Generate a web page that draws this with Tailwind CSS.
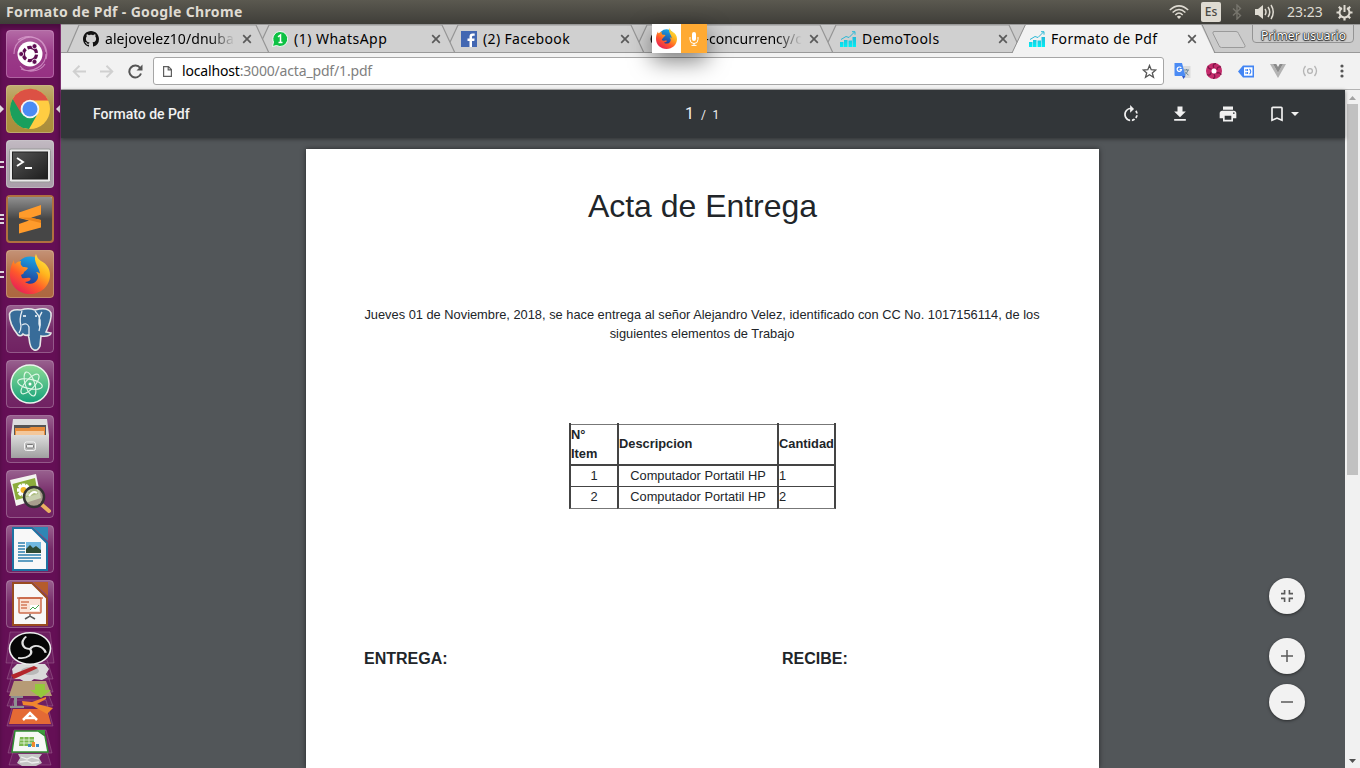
<!DOCTYPE html>
<html lang="es">
<head>
<meta charset="utf-8">
<title>Formato de Pdf</title>
<script src="https://cdn.jsdelivr.net/npm/@tailwindcss/browser@4"></script>
</head>
<body class="w-[1360px] h-[768px] overflow-hidden flex flex-col font-['Noto_Sans',sans-serif] text-[14px] bg-[#525659]">

<!-- shared symbols -->
<svg class="absolute w-0 h-0">
  <defs>
    <linearGradient id="ffo" x1="0.9" y1="0" x2="0.2" y2="1"><stop offset="0" stop-color="#fff04a"/><stop offset=".35" stop-color="#ffb51e"/><stop offset=".65" stop-color="#ff5a2a"/><stop offset="1" stop-color="#e5195c"/></linearGradient>
    <linearGradient id="ffb" x1="0.6" y1="0" x2="0.3" y2="1"><stop offset="0" stop-color="#1aa6e6"/><stop offset="1" stop-color="#24308e"/></linearGradient>
    <linearGradient id="bars" x1="0" y1="0" x2="0" y2="1"><stop offset="0" stop-color="#25b7d8"/><stop offset="1" stop-color="#00f0f5"/></linearGradient>
  </defs>
  <symbol id="firefox" viewBox="0 0 40 40">
    <circle cx="20" cy="17" r="14.500" fill="url(#ffb)"/>
    <path d="M26 0c1 3 2 5 5 7 6 3 9 8 9 14 0 11-9 19-20 19S0 32 0 21C0 15 1 11 4 6c0 2 0 3 1 4 2-2 4-3 6-3-1 3 0 4 2 6 2 0 4 0 5 1-1 2-3 3-4 4 0 2-2 2-3 3l1 3c3 1 5-1 8 0 2 1-1 4-5 4 4 3 10 2 12-2 2-3 1-6-1-8 2 0 4 1 4 2 0-6-8-13-4-20z" fill="url(#ffo)"/>
  </symbol>
  <symbol id="chart" viewBox="0 0 16 16">
    <path d="M0 11h3.500v5H0zM4 9h3.500v7H4zM8.500 9.500H12V16H8.500zM12.500 6H16v10h-3.500z" fill="url(#bars)"/>
    <path d="M1 8.500 6 5.500 9 6.500 14.500 1M12 .7h3v3" fill="none" stroke="#29b8d6" stroke-width="1"/>
  </symbol>
  <symbol id="close" viewBox="0 0 10 10"><path d="M1.200 1.200l7.600 7.600M8.800 1.200l-7.600 7.600" stroke="#5a5a5a" stroke-width="1.700" fill="none"/></symbol>
</svg>

<!-- system panel -->
<header class="h-6 shrink-0 flex items-center justify-between pl-1.5 pr-[7px] bg-linear-to-b from-[#5b5950] to-[#3f3e39] text-[#dfdbd2]">
  <span class="font-bold tracking-[0.345px] leading-6">Formato de Pdf - Google Chrome</span>
  <div class="flex items-center h-6">
    <svg class="w-5 h-4 mr-3" viewBox="0 0 20 16" fill="none" stroke="#dfdbd2" stroke-width="1.500"><path d="M.8 6Q10-2.300 19.200 6M3.600 8.500q6.400-6 12.800 0M6.300 11q3.700-3.800 7.400 0"/><path d="M7.800 12.700 10 15l2.200-2.300q-2.200-2-4.400 0z" fill="#dfdbd2" stroke="none"/></svg>
    <span class="w-5 h-5 rounded-xs bg-[#dfdbd2] text-[#4a4842] text-[12px] font-medium leading-5 text-center mr-[10px]">Es</span>
    <svg class="w-3 h-4 mr-[11px]" viewBox="0 0 12 16" fill="none" stroke="#77756d" stroke-width="1.400"><path d="M2 4.500l7.500 7L6 15V1l3.500 3.500L2 11.500"/></svg>
    <svg class="w-[21px] h-4 mr-3" viewBox="0 0 21 16"><path d="M1 5h3l5-4v14l-5-4H1z" fill="#dfdbd2"/><path d="M11 5q2 3 0 6M14 3q3.500 5 0 10M17 1q4.500 7 0 14" fill="none" stroke="#dfdbd2" stroke-width="1.500"/></svg>
    <span class="w-9 mr-[13px] leading-6 whitespace-nowrap">23:23</span>
    <svg class="w-[17px] h-[17px]" viewBox="0 0 17 17" fill="none" stroke="#dfdbd2"><path d="M6 4.200a5 5 0 1 0 5 0" stroke-width="2"/><path d="M8.500 1v7" stroke-width="2"/><path d="M8.500 13.500v3M.5 8.500h3M13.500 8.500h3M2.800 14.200l2.200-2.200M14.200 14.200 12 12M2.800 2.800 5 5M14.200 2.800 12 5" stroke-width="2.200"/></svg>
  </div>
</header>

<div class="flex flex-1 min-h-0">

<!-- launcher -->
<nav class="w-[61px] shrink-0 bg-[#640f55] border-r border-[#7b2f6e] shadow-[inset_0_4px_4px_rgba(0,0,0,0.25)]">
<svg class="w-[60px] h-[744px] block" viewBox="0 24 60 744">
  <defs>
    <linearGradient id="gl" x1="0" y1="0" x2="0" y2="1"><stop offset="0" stop-color="#fff" stop-opacity=".34"/><stop offset=".5" stop-color="#fff" stop-opacity=".12"/><stop offset="1" stop-color="#fff" stop-opacity=".08"/></linearGradient>
    <linearGradient id="glfade" x1="0" y1="0" x2="0" y2="1"><stop offset="0" stop-color="#fff" stop-opacity=".4"/><stop offset="1" stop-color="#fff" stop-opacity="0"/></linearGradient>
    <linearGradient id="silver" x1="0" y1="0" x2="0" y2="1"><stop offset="0" stop-color="#dcdcdc"/><stop offset="1" stop-color="#a0a0a0"/></linearGradient>
    <linearGradient id="term" x1="0" y1="0" x2="1" y2="1"><stop offset="0" stop-color="#555"/><stop offset="1" stop-color="#1d1d1d"/></linearGradient>
    <linearGradient id="atom" x1="0" y1="0" x2="0" y2="1"><stop offset="0" stop-color="#8fdc97"/><stop offset="1" stop-color="#15a07a"/></linearGradient>
    <g id="tile"><rect x=".5" y=".5" width="47" height="47" rx="3.500" fill="url(#gl)" stroke="#fff" stroke-opacity=".28"/></g>
  </defs>
  <!-- dash -->
  <g transform="translate(6 30)">
    <rect width="48" height="48" rx="4" fill="#8d1f78"/><use href="#tile"/>
    <path d="M8 24C8 10 22 4 32 9c8 4 10 14 8 20M40 24c0 12-14 20-25 15M12 10c10-7 26-3 28 12M14 36c6 8 20 6 25-2" fill="none" stroke="#e9b8df" stroke-opacity=".6" stroke-width="1.200"/>
    <circle cx="24" cy="24" r="12.500" fill="#fff"/>
    <circle cx="24" cy="24" r="6.600" fill="none" stroke="#5f0d52" stroke-width="3.200" stroke-dasharray="11.800 2" transform="rotate(6 24 24)"/>
    <g fill="#5f0d52" stroke="#fff" stroke-width=".8"><circle cx="15.200" cy="24" r="2.500"/><circle cx="28.500" cy="16.200" r="2.500"/><circle cx="28.500" cy="31.800" r="2.500"/></g>
  </g>
  <!-- chrome -->
  <g transform="translate(6 85)">
    <rect width="48" height="48" rx="4" fill="#a38329"/><use href="#tile"/>
    <circle cx="24" cy="24" r="20" fill="#ffcd42"/>
    <path d="M24 24 6.700 14A20 20 0 0 0 23 44l8-14z" fill="#1a9f5d"/>
    <path d="M6.700 14A20 20 0 0 1 42.300 15.500H24L15 28z" fill="#dc5144"/>
    <circle cx="24" cy="24" r="9.300" fill="#f4f4f4"/><circle cx="24" cy="24" r="7.500" fill="#4b8bf4"/>
  </g>
  <path d="M0 105l4 4-4 4zM60 105l-4 4 4 4z" fill="#e2dce0"/>
  <!-- terminal -->
  <g transform="translate(6 140)">
    <rect width="48" height="48" rx="4" fill="#a397a3"/><use href="#tile"/>
    <rect x="3.500" y="9" width="41" height="33" rx="1.500" fill="#e9e9e9" stroke="#999"/><rect x="6.500" y="12" width="35" height="27" fill="url(#term)" stroke="#222"/>
    <path d="M11 18l6 4-6 4M19 28h7" fill="none" stroke="#fff" stroke-width="1.900"/>
  </g>
  <path d="M0 162h4M0 167h4M0 215h4M0 219h4M0 223h4M0 272h4M0 277h4" stroke="#ddd6dc" stroke-width="2"/>
  <!-- sublime -->
  <g transform="translate(6 195)">
    <rect width="48" height="48" rx="4" fill="#b0703f"/><rect x="2" y="2" width="44" height="44" rx="2" fill="#464646"/><rect x="2" y="2" width="44" height="22" fill="url(#glfade)"/>
    <path d="M13 17.500 35 10v9.500l-10 3.200 10 2.300v7.500L13 38.500V29l10-3.500-10-2.500z" fill="#ff9b2b"/><path d="M13 22.500 35 28v-3l-10-2.300z" fill="#e8831a"/>
  </g>
  <!-- firefox -->
  <g transform="translate(6 250)"><rect width="48" height="48" rx="4" fill="#a65a2f"/><use href="#tile"/><use href="#firefox" x="4" y="4" width="40" height="40"/></g>
  <!-- postgres -->
  <g transform="translate(6 305)"><use href="#tile"/>
    <path d="M3.500 9Q5 3.500 15 5q7-2.500 14 0 13-3.500 16 3 1 6-5 19l5 1q-1 4-10 3l-1 10q-2 5-6 4-4-1-5-12l-1-3q-3 1-5-1-2 3-5 1Q3 19 3.500 9z" fill="#386c99" stroke="#e6e6e6" stroke-width="1.600"/>
    <path d="M16 6q-3 8-1 15 0 4-2 7M16 20q5-3 7 2v9M29 6q8 8 4 20M36 7q-5 7-2 16" fill="none" stroke="#e6edf3" stroke-width="1.300"/><path d="M17 11h3M29 11h2" stroke="#fff" stroke-width="1.500"/>
  </g>
  <!-- atom -->
  <g transform="translate(6 360)"><use href="#tile"/><circle cx="24" cy="24" r="19" fill="url(#atom)" stroke="#ebf5ee" stroke-width="1.500"/>
    <g fill="none" stroke="#dff7e6" stroke-width="1.100"><ellipse cx="24" cy="24" rx="12.500" ry="4.700" transform="rotate(12 24 24)"/><ellipse cx="24" cy="24" rx="12.500" ry="4.700" transform="rotate(72 24 24)"/><ellipse cx="24" cy="24" rx="12.500" ry="4.700" transform="rotate(132 24 24)"/></g><circle cx="24" cy="24" r="1.500" fill="#fff"/>
  </g>
  <!-- files -->
  <g transform="translate(6 415)"><use href="#tile"/><path d="M7 4h34l2 16H5z" fill="#dedede"/><rect x="8" y="10" width="32" height="11" fill="#565656"/><path d="M9 13h14l2-1h14v9H9z" fill="#e88e3c"/><path d="M10 16h28v5H10z" fill="#f3c79b"/><path d="M5 20h38v23H5z" fill="url(#silver)"/><rect x="18.500" y="27" width="11" height="8.500" rx="2" fill="#bbb" stroke="#f5f5f5"/><rect x="20.500" y="29.500" width="7" height="3.500" rx="1" fill="#eee" stroke="#777"/></g>
  <!-- image viewer -->
  <g transform="translate(6 470)"><use href="#tile"/><path d="M4 10 30 4l5 24-25 8z" fill="#f4f4f0"/><path d="M6.500 14 29 8l3 16-22 6z" fill="#8cad3c"/>
    <g stroke="#fff" stroke-width="3.500"><path d="M11 20h13M17.500 13.500v13M13 15l9 10M22 15l-9 10"/></g><circle cx="17.500" cy="20" r="3" fill="#f2b62a"/>
    <path d="M35 34l8 7" stroke="#eab162" stroke-width="4" stroke-linecap="round"/><circle cx="28" cy="27" r="10" fill="#b9c49a" fill-opacity=".75" stroke="#333" stroke-width="2.500"/><path d="M23 26q4-6 8-3" stroke="#fff" stroke-width="2" fill="none"/></g>
  <!-- writer -->
  <g transform="translate(6 525)"><use href="#tile"/><path d="M7 3h19l15 15v27H7z" fill="#f8f8f8" stroke="#1d73a3" stroke-width="2"/><path d="M27 2h15v14z" fill="#2f86b5"/><path d="M12 18h7M12 21h7M12 24h7M12 27h7M12 30h23M12 33h23M12 36h15" stroke="#2b7fae" stroke-width="1.500"/><rect x="20" y="17" width="15" height="11" fill="#71b8e0"/><path d="M20 28v-4l4-4 3 3 3-2 5 4v3z" fill="#2e4b35"/></g>
  <!-- impress -->
  <g transform="translate(6 580)"><use href="#tile"/><path d="M7 3h19l15 15v27H7z" fill="#f8f8f8" stroke="#9a4c20" stroke-width="2"/><path d="M27 2h15v14z" fill="#b55c2c"/><rect x="13" y="18" width="22" height="15" rx="1" fill="#fae3d7" stroke="#cc6b4b" stroke-width="1.500"/><path d="M15 22h8M15 25h6M15 28h6" stroke="#d37959" stroke-width="1.300"/><path d="M24 31v-6h9v6z" fill="#fff"/><path d="M24 30l3-3 2 2 4-4" stroke="#4ba54c" fill="none"/><path d="M11 18h26" stroke="#c45d3d" stroke-width="1.300"/><path d="M24 34v3M19 39l5-3 5 3" stroke="#555" stroke-width="1.500" fill="none"/></g>
  <!-- folded stack -->
  <g stroke="#b68dac" stroke-opacity=".35" fill="#fff" fill-opacity=".07"><path d="M10 632h40l4 31H6zM13 660h34l6 19H7zM13 672h34l6 20H7zM14 688h32l7 18H7zM14 700h32l7 26H7zM14 730h32l6 23H8zM15 745h30l6 20H9z"/></g>
  <!-- settings gear -->
  <path d="M12 669l5-5h7l4-3h6l4 3h7l4 5-3 5 2 3-6 3-8-1-4 3h-5l-5-3h-6z" fill="#dadada"/><ellipse cx="30" cy="671" rx="9" ry="4" fill="#b9b9b9"/><path d="M11 675 34 666l4 2-24 11z" fill="#b3262b"/>
  <!-- archive -->
  <path d="M14 681h32l6 15H9z" fill="#b69b76"/>
  <path d="M11 696h12v2H11zM14 698h3v8h-3zM10 706h14v2H10z" fill="#8d9090"/>
  <path d="M9 724l4-15h34l4 15z" fill="#e46a35"/><path d="M22 701l10 1 14-5v2l-9 5 16 4-6 6-14-8-10-1z" fill="#f0862e"/>
  <path d="M35 684h10v6h6l-10 8-11-8h5z" fill="#95c93c"/>
  <path d="M23 720l7-7 7 7M26 718h8" stroke="#fff" stroke-width="2.500" fill="none"/>
  <!-- calc -->
  <path d="M15 731h23l7 5 3 16H12z" fill="#f6f8f5" stroke="#2f8d32" stroke-width="1.500"/><path d="M36 730h9v5z" fill="#3d9c3d"/><path d="M20 737h14v9H19z" fill="#79b84d"/><path d="M20 740h14M20 743h14M24 737v9M29 737v9" stroke="#fff" stroke-width=".7"/><path d="M28 747v-3h3v3z" fill="#3c8cc7"/><path d="M32 747v-5h3v5z" fill="#ef8a2f"/><path d="M36 747v-3h3v3z" fill="#3c8cc7"/>
  <path d="M18 754h24l-3 4 3 5-6 3H22l-5-3 3-5z" fill="#c5c5c5"/><path d="M21 757l6 2 5-2 7 2M20 762l7-1 5 2 7-1" stroke="#efefef" fill="none" stroke-width="1.300"/>
  <!-- obs -->
  <ellipse cx="30" cy="648.500" rx="20.500" ry="15.800" fill="#060606" stroke="#eee" stroke-width="1.600"/>
  <g transform="translate(30 649) scale(1.28 1)" fill="none" stroke="#e2e2e2" stroke-width="1.800">
    <path id="arm" d="M0 0C-6 0-8-7-3-12.500"/><use href="#arm" transform="rotate(120)"/><use href="#arm" transform="rotate(240)"/>
  </g>
</svg>
</nav>

<!-- browser window -->
<main class="flex-1 min-w-0 flex flex-col">

  <!-- tab strip -->
  <div class="h-[29px] shrink-0 relative bg-[#cbcbcb]">
    <svg class="absolute inset-0 w-[1299px] h-[29px]" viewBox="61 24 1299 29">
      <g fill="#d0d0d0" stroke="#959595" stroke-width="1.200">
        <path d="M823 53l13-28h173l13 28z"/><path d="M634 53l13-28h173l13 28z"/><path d="M445 53l13-28h173l13 28z"/><path d="M256 53l13-28h173l13 28z"/><path d="M67 53l12-28h177l13 28z"/>
      </g>
      <path d="M61 52.500h1299M61 24.500h1299" stroke="#999"/>
      <path d="M1012 53.500l13.500-28.500h175.500l13.500 28.500z" fill="#f2f2f2"/><path d="M1012 53l13.500-28.500H1202L1215 53" fill="none" stroke="#8f8f8f"/>
      <path d="M1214 31.500h22q2 0 2.500 2l6.500 12q.5 2-1.500 2h-22q-2 0-2.500-2l-6-12q-.5-2 1-2z" fill="#d0d0d0" stroke="#9a9a9a"/>
      <path d="M1252.500 25v14q0 3.500 3.500 3.500h94q3.500 0 3.500-3.500V25" fill="#cecece" stroke="#949494"/>
    </svg>
    <div class="relative flex h-[29px] pl-[22px] text-black leading-[29px] whitespace-nowrap">
      <div class="flex items-center w-[189px]">
        <svg class="w-4 h-4 mr-1.5" viewBox="0 0 16 16"><path fill="#111" d="M8 0C3.580 0 0 3.580 0 8c0 3.540 2.290 6.530 5.470 7.590.4.070.55-.17.55-.38 0-.19-.01-.82-.01-1.490-2.010.37-2.530-.49-2.690-.94-.09-.23-.48-.94-.82-1.130-.28-.15-.68-.52-.01-.53.63-.01 1.080.58 1.230.82.72 1.210 1.870.87 2.330.66.070-.52.28-.87.51-1.070-1.780-.2-3.640-.89-3.640-3.950 0-.87.31-1.590.82-2.150-.08-.2-.36-1.020.08-2.120 0 0 .67-.21 2.200.82.64-.18 1.320-.27 2-.27s1.360.09 2 .27c1.530-1.040 2.200-.82 2.200-.82.44 1.100.16 1.920.08 2.120.51.56.82 1.270.82 2.150 0 3.070-1.870 3.750-3.650 3.950.29.25.54.73.54 1.480 0 1.070-.01 1.930-.01 2.200 0 .21.15.46.55.38A8.010 8.010 0 0 0 16 8c0-4.420-3.580-8-8-8z"/></svg>
        <span class="w-[130px] overflow-hidden tracking-[0.067px] mask-r-from-80% mask-r-to-100%">alejovelez10/dnuba</span>
        <svg class="w-2.5 h-2.5 ml-[7px]"><use href="#close"/></svg>
      </div>
      <div class="flex items-center w-[189px]">
        <svg class="w-4 h-4 mr-1.5" viewBox="0 0 16 16"><path d="M8 .5a7.500 7.500 0 1 1-3.500 14L.5 15.500 1.500 11A7.500 7.500 0 0 1 8 .5z" fill="#0dc143" stroke="#fff" stroke-width=".9"/><path d="M6 5.800 8.500 4v8M6.500 11.500h4" stroke="#fff" stroke-width="1.500" fill="none"/></svg>
        <span class="w-[130px] tracking-[0.48px]">(1) WhatsApp</span>
        <svg class="w-2.5 h-2.5 ml-[7px]"><use href="#close"/></svg>
      </div>
      <div class="flex items-center w-[189px]">
        <svg class="w-4 h-4 mr-1.5" viewBox="0 0 16 16"><rect width="16" height="16" fill="#4267b2"/><path d="M11 16V10h2.300l.3-2.500H11V6q0-1.200 1.200-1.200h1.500V2.500h-2.200Q8.500 2.500 8.500 5.500v2h-2V10h2v6z" fill="#fff"/></svg>
        <span class="w-[130px] tracking-[0.35px]">(2) Facebook</span>
        <svg class="w-2.5 h-2.5 ml-[7px]"><use href="#close"/></svg>
      </div>
      <div class="flex items-center w-[189px]">
        <svg class="w-4 h-4 mr-1.5" viewBox="0 0 16 16"><circle cx="8" cy="8" r="7.500" fill="#111"/></svg>
        <span class="w-[130px] overflow-hidden flex justify-end tracking-[0.02px] mask-r-from-80% mask-r-to-100%">go-concurrency/c</span>
        <svg class="w-2.5 h-2.5 ml-[7px]"><use href="#close"/></svg>
      </div>
      <div class="flex items-center w-[189px]">
        <svg class="w-4 h-4 ml-px mr-1.5"><use href="#chart"/></svg>
        <span class="w-[129px] tracking-[0.42px]">DemoTools</span>
        <svg class="w-2.5 h-2.5 ml-[7px]"><use href="#close"/></svg>
      </div>
      <div class="flex items-center w-[189px]">
        <svg class="w-4 h-4 ml-px mr-1.5"><use href="#chart"/></svg>
        <span class="w-[129px] tracking-[0.34px]">Formato de Pdf</span>
        <svg class="w-2.5 h-2.5 ml-[7px]"><use href="#close"/></svg>
      </div>
      <span class="ml-[44px] mt-[4px] h-4 leading-4 text-[12px] text-white tracking-[0.07px] [text-shadow:0_0_1px_#222,0_0_1px_#222,0_0_1px_#222,0_0_2px_#333,0_1px_1px_#333]">Primer usuario</span>
    </div>
    <!-- recording indicator -->
    <div class="absolute left-[591px] top-0 z-10 flex h-[29px] shadow-[0_8px_22px_rgba(0,0,0,0.5)]">
      <div class="w-[29px] bg-white flex items-center justify-center"><svg class="w-[21px] h-[21px]"><use href="#firefox"/></svg></div>
      <div class="w-[26px] bg-[#ffaa33] flex items-center justify-center"><svg class="w-2.5 h-3.5" viewBox="0 0 10 14"><rect x="3" y="0" width="4" height="9" rx="2" fill="#fff"/><path d="M1 5v2.500a4 4 0 0 0 8 0V5M5 11v2.500M2.500 13.400h5" fill="none" stroke="#fff"/></svg></div>
    </div>
  </div>

  <!-- address bar -->
  <div class="h-[37px] shrink-0 flex items-center bg-[#f2f2f2] border-b border-[#b3b3b3] pl-[11px] pr-3">
    <svg class="w-[14px] h-[13px] mr-[14px]" viewBox="0 0 14 13" fill="none" stroke="#d0d0d0" stroke-width="1.900"><path d="M7.500.8 1.700 6.500l5.800 5.700M2 6.500h12"/></svg>
    <svg class="w-[14px] h-[13px] mr-[14px]" viewBox="0 0 14 13" fill="none" stroke="#d0d0d0" stroke-width="1.900"><path d="M6.500.8l5.800 5.700-5.800 5.700M12 6.500H0"/></svg>
    <svg class="w-[15px] h-[15px] mr-[10px]" viewBox="0 0 15 15"><path d="M12.200 4A6 6 0 1 0 13 9.500" fill="none" stroke="#555" stroke-width="2"/><path d="M14.500.5v6h-6z" fill="#555"/></svg>
    <div class="w-[1011px] h-7 flex items-center bg-white border border-[#a6a6a6] rounded-[3px] pl-[9px] pr-[6px]">
      <svg class="w-[9px] h-[11px] mr-[10px]" viewBox="0 0 9 11" fill="none" stroke="#5f5f5f" stroke-width="1.200"><path d="M.6.600h4.900l2.900 3v6.800H.6zM5.200.6v3.200h3.200"/></svg>
      <span class="flex-1 tracking-[-0.168px] leading-7 text-[#808080]"><span class="text-black">localhost</span>:3000/acta_pdf/1.pdf</span>
      <svg class="w-[15px] h-[15px]" viewBox="0 0 15 15" fill="none" stroke="#555" stroke-width="1.300"><path d="M7.500 1.500l1.700 4.200 4.600.3-3.500 2.900 1.200 4.400-4-2.500-4 2.500 1.200-4.400L1.200 6l4.600-.3z"/></svg>
    </div>
    <div class="flex items-center ml-[10px]">
      <svg class="w-[17px] h-4 mr-[15px]" viewBox="0 0 17 16"><path d="M7 3h9.500v12H10z" fill="#dcdcdc"/><path d="M10 7h5M12.500 6v1M14 7q-1 4-4 5M11 8.500q1.500 2.500 3.500 3.500" stroke="#6d8796" fill="none"/><path d="M1 0h7l3.500 13H1.200Q.5 13 .5 12V.6z" fill="#4b8bf4"/><path d="M8 13h3.500l-2 3z" fill="#3059c9"/><path d="M7.200 5A2.200 2.200 0 1 0 7.500 6.700H5.600" stroke="#fff" stroke-width="1.200" fill="none"/></svg>
      <svg class="w-4 h-4 mr-4" viewBox="0 0 16 16"><circle cx="8" cy="8" r="8" fill="#c52a6b"/><g stroke="#7d1748" stroke-width="1.300" fill="none"><path d="M8 5Q6 1 10 .5M11 7q0-4 4-3M10.500 10q4-1 4.500 2M8 11q2 4-1 4.500M5 9.500q-1 4-4 2M5.500 6Q2 6 2 3"/></g><circle cx="8" cy="8" r="2.500" fill="#fff"/></svg>
      <svg class="w-[17px] h-[13px] mr-[15px]" viewBox="0 0 17 13"><path d="M0 6.500 5 .5h11v12H5z" fill="#4285f4"/><rect x="6" y="2.300" width="8.500" height="8.400" fill="#fff"/><path d="M8 4v2M8 7v2M9.500 4v2M9.500 7v2M11.500 3.800q2.500 2.700 0 5.400" stroke="#4285f4" stroke-width="1.100" fill="none"/></svg>
      <svg class="w-4 h-[14px] mr-4" viewBox="0 0 16 14"><path d="M0 0h3l5 8.700L13 0h3L8 14z" fill="#b3b3b3"/><path d="M3 0h3.300L8 3l1.700-3H13L8 8.700z" fill="#8b8b8b"/></svg>
      <svg class="w-4 h-4 mr-[22px]" viewBox="0 0 16 16" fill="none" stroke="#b5b5b5" stroke-width="1.300"><circle cx="8" cy="8" r="2.400"/><path d="M3.500 3q-4 5 0 10M12.500 3q4 5 0 10"/></svg>
      <svg class="w-1 h-[14px]" viewBox="0 0 4 14" fill="#555"><circle cx="2" cy="2" r="1.600"/><circle cx="2" cy="7" r="1.600"/><circle cx="2" cy="12" r="1.600"/></svg>
    </div>
  </div>

  <!-- pdf viewer -->
  <div class="flex flex-1 min-h-0">
    <div class="relative w-[1284px] flex flex-col items-center bg-[#525659]">
      <div class="relative z-10 w-full h-12 shrink-0 bg-[#323639] shadow-[0_1px_4px_rgba(0,0,0,0.45)] grid grid-cols-[1fr_auto_1fr] items-center text-[#f1f1f1] font-['Roboto',sans-serif]">
        <span class="pl-8 font-medium">Formato de Pdf</span>
        <div class="flex items-baseline w-[36px] gap-[7px] whitespace-nowrap"><span class="text-[16px]">1</span><span class="text-[12px] tracking-[0.2px]">/&nbsp; 1</span></div>
        <div class="flex items-center justify-end pr-[44px]">
          <svg class="w-[18px] h-[18px] mr-[30px]" viewBox="2 1 20 21" fill="#f1f1f1"><path d="M15.550 5.550L11 1v3.070C7.060 4.560 4 7.920 4 12s3.050 7.440 7 7.930v-2.020c-2.840-.48-5-2.940-5-5.910s2.160-5.430 5-5.910V10l4.550-4.450zM19.930 11c-.17-1.390-.72-2.730-1.620-3.890l-1.420 1.420c.54.75.88 1.600 1.020 2.470h2.020zM13 17.900v2.020c1.390-.17 2.740-.71 3.900-1.610l-1.440-1.440c-.75.54-1.590.89-2.460 1.030zm3.890-2.420l1.420 1.410c.9-1.160 1.450-2.500 1.620-3.890h-2.020c-.14.87-.48 1.720-1.020 2.480z"/></svg>
          <svg class="w-5 h-5 mr-7" viewBox="0 0 24 24" fill="#f1f1f1"><path d="M19 9h-4V3H9v6H5l7 7 7-7zM5 18v2h14v-2H5z"/></svg>
          <svg class="w-5 h-5 mr-[29px]" viewBox="0 0 24 24" fill="#f1f1f1"><path d="M19 8H5c-1.660 0-3 1.340-3 3v6h4v4h12v-4h4v-6c0-1.660-1.340-3-3-3zm-3 11H8v-5h8v5zm3-7c-.55 0-1-.45-1-1s.45-1 1-1 1 .45 1 1-.45 1-1 1zm-1-9H6v4h12V3z"/></svg>
          <svg class="w-5 h-5" viewBox="0 0 24 24" fill="#f1f1f1"><path d="M17 3H7c-1.100 0-1.990.9-1.990 2L5 21l7-3 7 3V5c0-1.100-.9-2-2-2zm0 15l-5-2.180L7 18V5h10v13z"/></svg>
          <svg class="w-2 h-1 ml-1 mr-[2px]" viewBox="0 0 8 4"><path d="M0 0h8L4 4z" fill="#f1f1f1"/></svg>
        </div>
      </div>

      <!-- page -->
      <div class="mt-[11px] w-[793px] -ml-px flex-1 min-h-0 overflow-hidden bg-white shadow-[0_0_5px_rgba(0,0,0,0.55)] pt-[38px] flex flex-col items-center font-['Liberation_Sans',sans-serif] text-[#212529] text-[12.83px] leading-[19.2px]">
        <h1 class="text-[32px] leading-[38px] tracking-[-0.03px]">Acta de Entrega</h1>
        <p class="mt-[80px] pr-px text-center whitespace-nowrap">Jueves 01 de Noviembre, 2018, se hace entrega al señor Alejandro Velez, identificado con CC No. 1017156114, de los<br>siguientes elementos de Trabajo</p>
        <div class="mt-[80px] w-[267px] h-[86px] shrink-0 grid grid-cols-[48px_160px_59px] grid-rows-[43px_21px_22px] [&>*]:border-l-2 [&>*]:border-[#444]">
          <div class="pt-px"><div class="h-full border-t border-b-2 border-[#777] border-b-[#444] font-bold leading-[19px]">N°<br>Item</div></div>
          <div class="pt-px"><div class="h-full border-t border-b-2 border-[#777] border-b-[#444] font-bold flex items-center pb-[2px]">Descripcion</div></div>
          <div class="pt-px border-r-2"><div class="h-full border-t border-b-2 border-[#777] border-b-[#444] font-bold flex items-center pb-[2px]">Cantidad</div></div>
          <div class="border-b text-center">1</div><div class="border-b text-center">Computador Portatil HP</div><div class="border-b border-r-2">1</div>
          <div class="border-b border-b-[#777]! text-center">2</div><div class="border-b border-b-[#777]! text-center">Computador Portatil HP</div><div class="border-b border-r-2 border-b-[#777]!">2</div>
        </div>
        <div class="mt-[138px] w-full pl-[58px] grid grid-cols-[418px_1fr] font-bold text-[16px] leading-6"><span>ENTREGA:</span><span>RECIBE:</span></div>
      </div>

      <!-- zoom buttons -->
      <div class="absolute right-10 bottom-12 z-10 flex flex-col [&>*]:w-9 [&>*]:h-9 [&>*]:rounded-full [&>*]:bg-[#f2f2f2] [&>*]:flex [&>*]:items-center [&>*]:justify-center [&>*]:shadow-[0_1px_3px_rgba(0,0,0,0.5)]">
        <div class="mb-6"><svg class="w-3 h-3" viewBox="0 0 12 12" fill="none" stroke="#5a5a5a" stroke-width="1.600"><path d="M0 3.600h3.600V0M8.400 0v3.600H12M0 8.400h3.600V12M12 8.400H8.400V12"/></svg></div>
        <div class="mb-2.5"><svg class="w-3 h-3" viewBox="0 0 12 12" stroke="#5a5a5a" stroke-width="1.500"><path d="M6 0v12M0 6h12"/></svg></div>
        <div><svg class="w-3 h-3" viewBox="0 0 12 12" stroke="#5a5a5a" stroke-width="1.500"><path d="M0 6h12"/></svg></div>
      </div>
    </div>

    <!-- scrollbar -->
    <div class="w-[15px] bg-[#f1f1f1] flex flex-col items-center">
      <svg class="w-[15px] h-[14px] shrink-0" viewBox="0 0 15 14"><path d="M4 10l3.500-4 3.500 4z" fill="#a3a3a3"/></svg>
      <div class="w-[11px] h-[371px] bg-[#c1c1c1]"></div>
      <svg class="w-[15px] h-[14px] mt-auto" viewBox="0 0 15 14"><path d="M4 5l3.500 4L11 5z" fill="#505050"/></svg>
    </div>
  </div>
</main>
</div>
</body>
</html>
